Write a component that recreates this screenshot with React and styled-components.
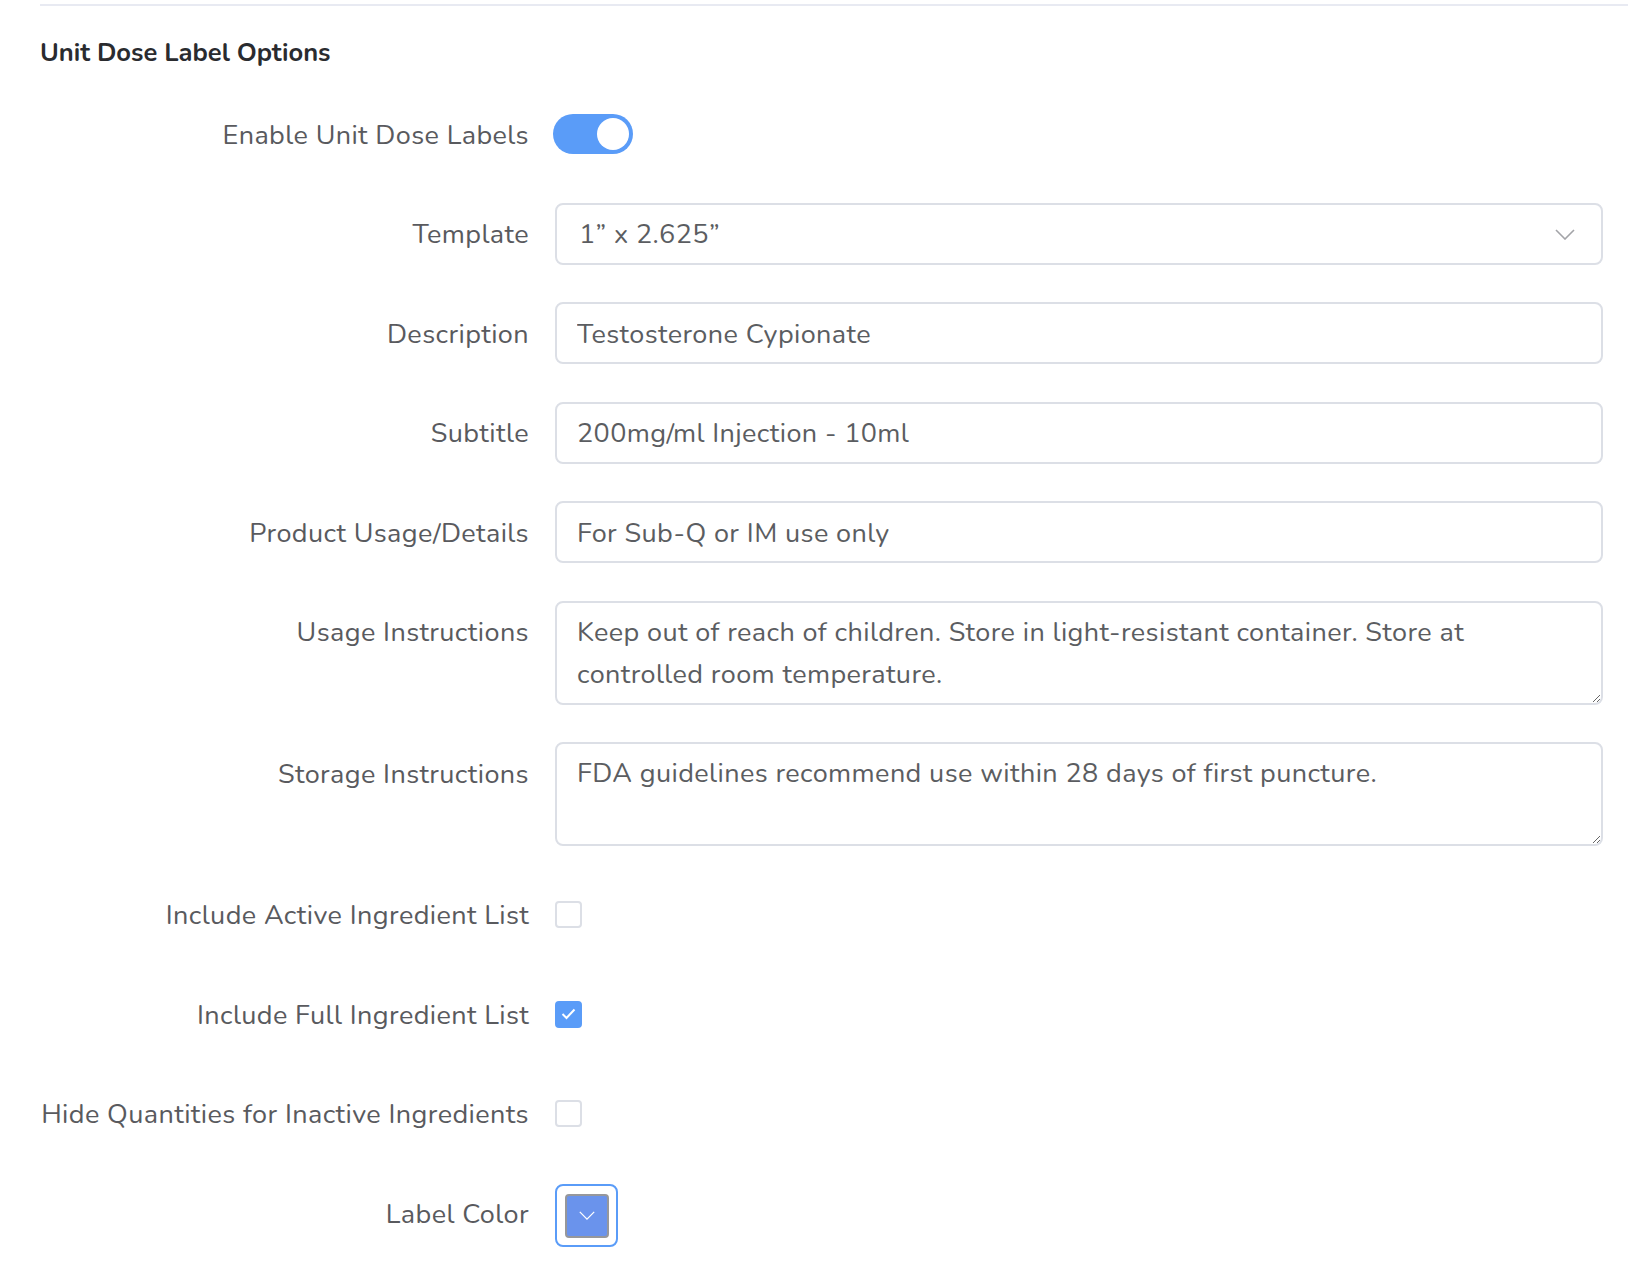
import React from "react";
import styled, { createGlobalStyle } from "styled-components";

const Global = createGlobalStyle`
    html, body {
        margin: 0;
        padding: 0;
        background: #fff;
    }
    body {
        font-family: "Nunito", Lato, "Noto Sans", sans-serif;
        -webkit-font-smoothing: antialiased;
    }
    * { box-sizing: border-box; }
`;

const Page = styled.section`
    width: 1628px;
    padding: 4px 0 20px 40px;
`;
const Divider = styled.div`
    height: 2px;
    background: #e8eaf2;
`;
const Heading = styled.h2`
    margin: 26px 0 29px;
    font-size: 25.5px;
    line-height: 42px;
    font-weight: 700;
    color: #2a2b2f;
`;
const Form = styled.div`
    display: grid;
    grid-template-columns: 489px 1048px;
    column-gap: 26px;
    row-gap: 37.5px;
    align-items: start;
`;
const Label = styled.label`
    height: 62px;
    display: flex;
    align-items: center;
    justify-content: flex-end;
    font-size: 27px;
    letter-spacing: 0.4px;
    color: #595a5e;
    white-space: nowrap;
    padding-top: 2px;
`;
const Control = styled.div`
    min-height: 62px;
    display: flex;
    align-items: center;
`;
const fieldBase = `
    width: 100%;
    border: 2px solid #dcdfe6;
    border-radius: 8px;
    background: #fff;
    font-family: "Nunito", Lato, "Noto Sans", sans-serif;
    font-size: 27px;
    letter-spacing: 0.4px;
    color: #5b5d61;
    outline: none;
`;
const Input = styled.input`
    ${fieldBase}
    height: 62px;
    padding: 2px 20px 0;
`;
const TextArea = styled.textarea`
    ${fieldBase}
    height: 104px;
    padding: 9px 20px 5px;
    line-height: 42px;
    resize: vertical;
    display: block;
`;
const Select = styled.div`
    ${fieldBase}
    height: 62px;
    padding: 2px 26px 0 22px;
    display: flex;
    align-items: center;
    justify-content: space-between;
`;
const Toggle = styled.span`
    width: 80px;
    height: 40px;
    border-radius: 20px;
    background: ${p => (p.$on ? "#5a9cf8" : "#c9ccd3")};
    display: flex;
    align-items: center;
    justify-content: ${p => (p.$on ? "flex-end" : "flex-start")};
    padding: 0 4px;
    margin-left: -2px;
    &::after {
        content: "";
        width: 32px;
        height: 32px;
        border-radius: 50%;
        background: #fff;
    }
`;
const Check = styled.span`
    width: 27px;
    height: 27px;
    border-radius: 4px;
    border: 2px solid ${p => (p.$checked ? "#5a9cf8" : "#dcdfe6")};
    background: ${p => (p.$checked ? "#5a9cf8" : "#fff")};
    display: flex;
    align-items: center;
    justify-content: center;
`;
const ColorPicker = styled.span`
    width: 63px;
    height: 63px;
    border: 2px solid #5a9cf8;
    border-radius: 8px;
    display: flex;
    align-items: center;
    justify-content: center;
    margin-top: 2px;
`;
const Swatch = styled.span`
    width: 44px;
    height: 44px;
    border: 2px solid #96979b;
    border-radius: 4px;
    background: ${p => p.$color};
    display: flex;
    align-items: center;
    justify-content: center;
`;

const Chevron = ({ color = "#a3a4a8", w = 20, h = 11 }) => (
    <svg width={w} height={h} viewBox="0 0 20 11" fill="none">
        <path d="M1 1l9 9 9-9" stroke={color} strokeWidth="1.6" />
    </svg>
);

export default () => {
    return <>
        <Global />
        <Page>
            <Divider />
            <Heading>Unit Dose Label Options</Heading>
            <Form>
                <Label>Enable Unit Dose Labels</Label>
                <Control><Toggle $on /></Control>

                <Label>Template</Label>
                <Select>
                    <span>1” x 2.625”</span>
                    <Chevron />
                </Select>

                <Label>Description</Label>
                <Input defaultValue="Testosterone Cypionate" />

                <Label>Subtitle</Label>
                <Input defaultValue="200mg/ml Injection - 10ml" />

                <Label>Product Usage/Details</Label>
                <Input defaultValue="For Sub-Q or IM use only" />

                <Label>Usage Instructions</Label>
                <TextArea defaultValue="Keep out of reach of children. Store in light-resistant container. Store at controlled room temperature." />

                <Label>Storage Instructions</Label>
                <TextArea defaultValue="FDA guidelines recommend use within 28 days of first puncture." />

                <Label>Include Active Ingredient List</Label>
                <Control><Check /></Control>

                <Label>Include Full Ingredient List</Label>
                <Control>
                    <Check $checked>
                        <svg width="15" height="12" viewBox="0 0 15 12" fill="none">
                            <path d="M1.5 6l4 4 8-8.5" stroke="#fff" strokeWidth="2" />
                        </svg>
                    </Check>
                </Control>

                <Label>Hide Quantities for Inactive Ingredients</Label>
                <Control><Check /></Control>

                <Label>Label Color</Label>
                <Control>
                    <ColorPicker>
                        <Swatch $color="#6a93ec">
                            <Chevron color="#fff" w={16} h={9} />
                        </Swatch>
                    </ColorPicker>
                </Control>
            </Form>
        </Page>
    </>
}
